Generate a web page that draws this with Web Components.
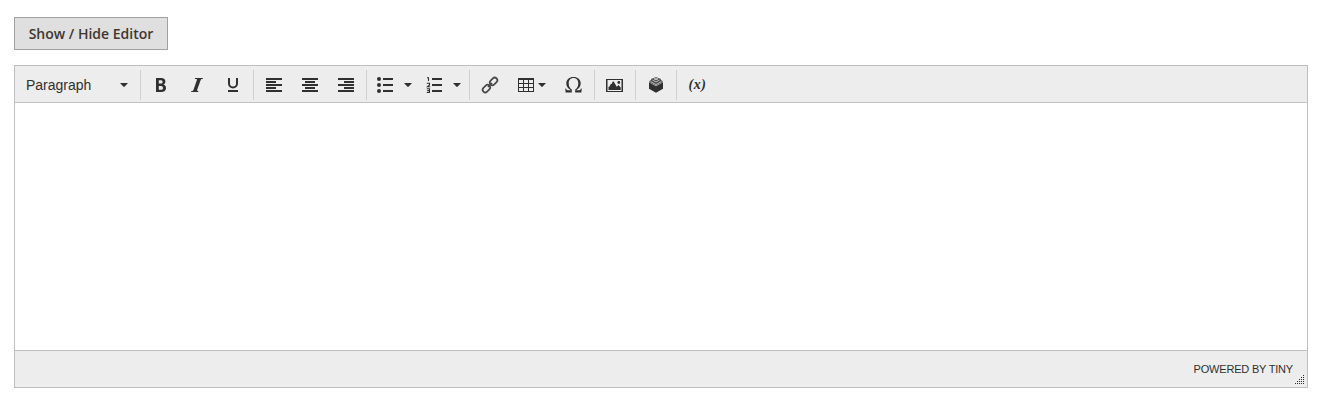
<!DOCTYPE html>
<html lang="en">
<head>
<meta charset="utf-8">
<title>Editor</title>
<style>
body{margin:0;background:#fff;font-family:"Liberation Sans",Arial,sans-serif;color:#303030}
</style>
</head>
<body>
<editor-page></editor-page>
<script>
const define=(name,html)=>customElements.define(name,class extends HTMLElement{
  constructor(){
    super();
    const t=document.createElement('template');
    t.innerHTML=html;
    this.attachShadow({mode:'open'}).append(t.content.cloneNode(true));
  }
});

const icons={
bold:'<path fill-rule="evenodd" d="M7 5h5.2c2.8 0 4.2 1.300 4.200 3.400 0 1.500-.8 2.600-2 3.100 1.600.4 2.600 1.600 2.600 3.400 0 2.600-1.800 4.100-4.600 4.100H7ZM9.800 7.200v3.400h1.900c1.200 0 1.900-.6 1.900-1.700s-.7-1.700-1.900-1.700ZM9.800 12.900v3.900H12c1.300 0 2-.7 2-1.900 0-1.300-.7-2-2-2Z"/>',
italic:'<path d="M10 5h7.900l-.2 1h-.8c-.7.1-1 .4-1.200 1L12.100 17c-.1.600.1.900.7 1h.6l-.2 1H6.100l.2-1h.8c.7-.1 1.100-.4 1.300-1l3.500-10c.1-.6-.1-.9-.8-1H9.800Z"/>',
underline:'<path d="M8 5v5.500a4 4 0 0 0 8 0V5" fill="none" stroke="currentColor" stroke-width="2"/><path d="M7 17h10v2H7z"/>',
left:'<path d="M4 5h16v2H4zM4 8h10v2H4zM4 11h16v2H4zM4 14h10v2H4zM4 17h16v2H4z"/>',
center:'<path d="M4 5h16v2H4zM7 8h10v2H7zM4 11h16v2H4zM7 14h10v2H7zM4 17h16v2H4z"/>',
right:'<path d="M4 5h16v2H4zM10 8h10v2H10zM4 11h16v2H4zM10 14h10v2H10zM4 17h16v2H4z"/>',
bullets:'<circle cx="6" cy="6" r="2"/><circle cx="6" cy="12" r="2"/><circle cx="6" cy="18" r="2"/><path d="M10 5h10v2H10zM10 11h10v2H10zM10 17h10v2H10z"/>',
numbers:'<path d="M10 5h10v2H10zM10 11h10v2H10zM10 17h10v2H10z"/><path d="M5 4.700h1.500V8M4.800 10.200h2.700v1.800L5.500 13.700h2.700M4.800 15.700h2.700v3.800H4.800M5.200 17.600h2.300" fill="none" stroke="currentColor" stroke-width="1.100"/>',
link:'<g fill="none" stroke="#484848" stroke-width="1.700"><rect x="-4.200" y="-2.600" width="8.400" height="5.200" rx="2.600" transform="translate(8.400 15.600) rotate(-45)"/><rect x="-4.200" y="-2.600" width="8.400" height="5.200" rx="2.600" transform="translate(15.600 8.400) rotate(-45)"/><path d="m10 14 4-4"/></g>',
table:'<path fill-rule="evenodd" d="M4 5h16v14H4zM5 7v3h4V7zM10 7v3h4V7zM15 7v3h4V7zM5 11v3h4v-3zM10 11v3h4v-3zM15 11v3h4v-3zM5 15v3h4v-3zM10 15v3h4v-3zM15 15v3h4v-3z"/>',
omega:'<path d="M3.300 15.500h.8c.2 1.300.6 1.700 1.800 1.700h2.700v-.3C6 15.700 4.300 13.300 4.300 10.500 4.300 6.600 7.300 4 11.500 4s7.200 2.600 7.200 6.500c0 2.800-1.700 5.200-4.300 6.400v.3h2.700c1.200 0 1.600-.4 1.800-1.700h.8l-.3 4h-6.200v-3.100c2-1.300 3.100-3.200 3.100-6 0-3.200-1.800-5.300-4.800-5.300s-4.800 2.100-4.800 5.300c0 2.800 1.100 4.700 3.100 6v3.100H3.600Z"/>',
image:'<path fill-rule="evenodd" d="M3 6h17v13H3zM4.500 7v11h14V7z"/><path d="M5.500 17v-3.300h.8l1.500-2.700h.8L9.800 8.500h.9l3 5.300 1.800-1.800 2.200 2.500V17z"/><circle cx="15.800" cy="9.500" r="1.400"/>',
cube:'<path d="m5 9.300 7 4 7-4v6.500L12 19.700 5 15.800Z"/><path d="M5.400 9.200V8l1.700-1V6l4.900-2 4.900 2v1l1.700 1v1.200L12 12.700Z" opacity=".85"/><g fill="none" stroke="#ededed" stroke-width=".7"><path d="m6.500 8.600 5.500 3 5.500-3M8.500 7.100l3.500 1.800 3.500-1.800"/><path d="m10 5.900 2-.8 2 .8-2 .8Z"/></g>'
};

customElements.define('tool-icon',class extends HTMLElement{
  constructor(){
    super();
    this.attachShadow({mode:'open'}).innerHTML='<style>:host{display:block;width:24px;height:24px}svg{display:block;fill:currentColor}</style><svg width="24" height="24" viewBox="0 0 24 24">'+icons[this.getAttribute('name')]+'</svg>';
  }
});
define('tool-caret','<style>:host{display:block;width:10px;height:6px}svg{display:block;fill:currentColor}</style><svg width="10" height="6"><path d="M1 1h8L5.700 4.600Q5 5.200 4.300 4.600Z"/></svg>');
define('tool-button','<style>:host{display:flex;box-sizing:border-box;width:36px;height:34px;align-items:center;justify-content:center}:host([split]){width:49px;justify-content:flex-start;padding-left:4px;gap:6px}:host([menu]){width:48px;justify-content:flex-start;padding-left:6px;gap:0}:host([menu]) ::slotted(tool-caret){margin-left:-1px}</style><slot></slot>');
define('tool-group','<style>:host{display:flex;align-items:center;height:30px;padding:0 2px;border-right:1px solid #d0d0d0}:host([last]){border-right:0}</style><slot></slot>');
define('format-select','<style>:host{display:flex;box-sizing:border-box;width:121px;height:34px;align-items:center;justify-content:space-between;padding:0 9px 0 9px;font-size:14px;line-height:18px}</style><span><slot></slot></span><tool-caret></tool-caret>');
define('toggle-button','<style>:host{display:block}button{display:block;box-sizing:border-box;width:154px;height:33px;padding:0;border:1px solid #a0a0a0;background:#dfdfdf;color:#41362f;font:600 14px/20px "Open Sans",sans-serif}</style><button><slot></slot></button>');
define('editor-toolbar','<style>:host{display:flex;box-sizing:border-box;align-items:center;height:37px;background:#ededed;border-bottom:1px solid #c4c4c4;padding-top:2px}</style><slot></slot>');
define('editor-status',`<style>:host{display:flex;box-sizing:border-box;height:37px;border-top:1px solid #bfbfbf;background:#ededed;justify-content:flex-end;font-size:11px;line-height:36px;letter-spacing:-.19px}svg{align-self:flex-end;margin:0 3px 2px 1px;fill:#303030}</style><span><slot></slot></span><svg width="10" height="10"><path d="M9 0h1v1H9zM7 2h1v1H7zM9 2h1v1H9zM5 4h1v1H5zM7 4h1v1H7zM9 4h1v1H9zM3 6h1v1H3zM5 6h1v1H5zM7 6h1v1H7zM9 6h1v1H9zM1 8h1v1H1zM3 8h1v1H3zM5 8h1v1H5zM7 8h1v1H7zM9 8h1v1H9z"/></svg>`);
define('editor-frame','<style>:host{display:flex;flex-direction:column;box-sizing:border-box;height:323px;border:1px solid #bfbfbf}main{flex:1;background:#fff}</style><slot name="toolbar"></slot><main></main><slot name="status"></slot>');
define('variable-mark','<style>:host{display:block;font:italic bold 14px/20px "Liberation Serif",serif;letter-spacing:.6px;padding-left:1px}</style><slot></slot>');
define('editor-page',`<style>:host{display:flex;flex-direction:column;gap:15px;box-sizing:border-box;height:405px;padding:17px 16px 0 14px}</style>
<toggle-button>Show / Hide Editor</toggle-button>
<editor-frame>
<editor-toolbar slot="toolbar">
<tool-group><format-select>Paragraph</format-select></tool-group>
<tool-group><tool-button><tool-icon name="bold"></tool-icon></tool-button><tool-button><tool-icon name="italic"></tool-icon></tool-button><tool-button><tool-icon name="underline"></tool-icon></tool-button></tool-group>
<tool-group><tool-button><tool-icon name="left"></tool-icon></tool-button><tool-button><tool-icon name="center"></tool-icon></tool-button><tool-button><tool-icon name="right"></tool-icon></tool-button></tool-group>
<tool-group><tool-button split><tool-icon name="bullets"></tool-icon><tool-caret></tool-caret></tool-button><tool-button split><tool-icon name="numbers"></tool-icon><tool-caret></tool-caret></tool-button></tool-group>
<tool-group><tool-button><tool-icon name="link"></tool-icon></tool-button><tool-button menu><tool-icon name="table"></tool-icon><tool-caret></tool-caret></tool-button><tool-button><tool-icon name="omega"></tool-icon></tool-button></tool-group>
<tool-group><tool-button><tool-icon name="image"></tool-icon></tool-button></tool-group>
<tool-group><tool-button><tool-icon name="cube"></tool-icon></tool-button></tool-group>
<tool-group last><tool-button><variable-mark>(x)</variable-mark></tool-button></tool-group>
</editor-toolbar>
<editor-status slot="status">POWERED BY TINY</editor-status>
</editor-frame>`);
</script>
</body>
</html>
